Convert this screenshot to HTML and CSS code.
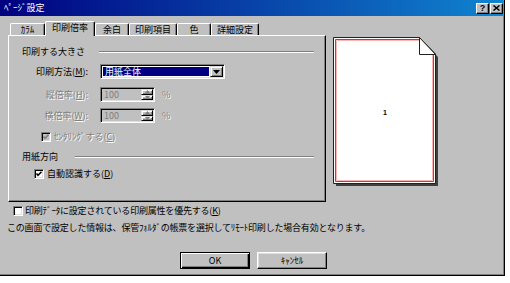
FILE: index.html
```html
<!DOCTYPE html>
<html lang="ja">
<head>
<meta charset="utf-8">
<link rel="stylesheet" href="styles.css">
</head>
<body>
<div class="dialog">
  <div class="titlebar">
    <span class="title">ﾍﾟｰｼﾞ設定</span>
    <div class="tbtns">
      <span class="tbtn help">?</span>
      <span class="tbtn"><svg width="7" height="6" viewBox="0 0 7 6"><path d="M0.5,0.5 L6.5,5.5 M6.5,0.5 L0.5,5.5" stroke="#000" stroke-width="1.5"/></svg></span>
    </div>
  </div>
  <div class="main">
    <div class="left">
      <div class="tabs">
        <span class="tab">ｶﾗﾑ</span>
        <span class="tab active">印刷倍率</span>
        <span class="tab">余白</span>
        <span class="tab">印刷項目</span>
        <span class="tab">色</span>
        <span class="tab">詳細設定</span>
      </div>
      <div class="panel">
        <div class="ghead g1"><span>印刷する大きさ</span><span class="line"></span></div>
        <div class="row r-combo">
          <span class="lbl">印刷方法(<u>M</u>):</span>
          <div class="combo">
            <span class="val">用紙全体</span>
            <span class="ddbtn"><svg width="7" height="4" viewBox="0 0 7 4"><path d="M0,0 H7 L3.5,4 Z" fill="#000"/></svg></span>
          </div>
        </div>
        <div class="row r-spin1">
          <span class="lbl dis">縦倍率(<u>H</u>):</span>
          <div class="spin">
            <span class="v">100</span>
            <span class="sbtns">
              <span class="sb"><svg width="5" height="3" viewBox="0 0 5 3"><path d="M2.5,0 L5,3 H0 Z" fill="#808080"/></svg></span>
              <span class="sb"><svg width="5" height="3" viewBox="0 0 5 3"><path d="M0,0 H5 L2.5,3 Z" fill="#808080"/></svg></span>
            </span>
          </div>
          <span class="pct dis">%</span>
        </div>
        <div class="row r-spin2">
          <span class="lbl dis">横倍率(<u>W</u>):</span>
          <div class="spin">
            <span class="v">100</span>
            <span class="sbtns">
              <span class="sb"><svg width="5" height="3" viewBox="0 0 5 3"><path d="M2.5,0 L5,3 H0 Z" fill="#808080"/></svg></span>
              <span class="sb"><svg width="5" height="3" viewBox="0 0 5 3"><path d="M0,0 H5 L2.5,3 Z" fill="#808080"/></svg></span>
            </span>
          </div>
          <span class="pct dis">%</span>
        </div>
        <div class="chk c-center">
          <span class="cb disabled"><svg width="8" height="8" viewBox="0 0 8 8"><path d="M1.5,3.5 L3,5.3 L6.5,1.8" fill="none" stroke="#808080" stroke-width="1.6"/></svg></span>
          <span class="dis">ｾﾝﾀﾘﾝｸﾞする(<u>C</u>)</span>
        </div>
        <div class="ghead g2"><span>用紙方向</span><span class="line"></span></div>
        <div class="chk c-auto">
          <span class="cb"><svg width="8" height="8" viewBox="0 0 8 8"><path d="M1.5,3.5 L3,5.3 L6.5,1.8" fill="none" stroke="#000" stroke-width="1.6"/></svg></span>
          <span>自動認識する(<u>D</u>)</span>
        </div>
      </div>
    </div>
    <div class="preview">
      <svg width="106" height="150" viewBox="0 0 106 150">
        <polygon points="3,3 89,3 105,20 105,149 3,149" fill="#404040"/>
        <polygon points="0.5,0.5 86.5,0.5 102.5,17 102.5,146.5 0.5,146.5" fill="#fff" stroke="#202020"/>
        <path d="M86,3.5 H3.5 V143.5 H99.5 V17.5" fill="none" stroke="#ffb4b4"/>
        <path d="M86,2.5 H2.5 V144.5 H100.5 V17.5" fill="none" stroke="#ff2020"/>
        <polygon points="86.5,0.5 86.5,17.5 102.5,17.5" fill="#fff" stroke="#202020"/>
        <text x="50" y="78" class="pnum">1</text>
      </svg>
    </div>
  </div>
  <div class="opt">
    <span class="cb"></span>
    <span>印刷ﾃﾞｰﾀに設定されている印刷属性を優先する(<u>K</u>)</span>
  </div>
  <div class="info">この画面で設定した情報は、保管ﾌｫﾙﾀﾞの帳票を選択してﾘﾓｰﾄ印刷した場合有効となります。</div>
  <div class="btns">
    <button class="btn def">OK</button>
    <button class="btn">ｷｬﾝｾﾙ</button>
  </div>
</div>
</body>
</html>
```
FILE: styles.css
```css
* { box-sizing: border-box; }
body {
  margin: 0;
  background: #fff;
  font-family: "Noto Sans CJK JP", sans-serif;
  font-size: 9px;
  line-height: 10px;
  color: #000;
}
u { text-decoration: underline; text-underline-offset: 1px; }
.dialog {
  width: 505px;
  height: 276px;
  background: #c0c0c0;
  border-right: 1px solid #000;
  border-bottom: 1px solid #000;
  box-shadow: inset -1px -1px #808080;
  display: flex;
  flex-direction: column;
}
.titlebar {
  height: 16px;
  margin-right: 1px;
  background: linear-gradient(to right, #000080, #1084d0);
  display: flex;
  align-items: center;
  padding-left: 4px;
  color: #fff;
}
.title { flex: 1; }
.tbtns { display: flex; gap: 1px; }
.tbtn {
  width: 13px;
  height: 11px;
  background: #c0c0c0;
  border: 1px solid;
  border-color: #fff #000 #000 #fff;
  box-shadow: inset -1px -1px #808080;
  display: flex;
  align-items: center;
  justify-content: center;
  color: #000;
}
.tbtn.help {
  font-family: "Liberation Sans", sans-serif;
  font-weight: bold;
  font-size: 9px;
  line-height: 9px;
}
.main { display: flex; padding: 5px 0 0 8px; }
.left { width: 318px; display: flex; flex-direction: column; }
.tabs { display: flex; align-items: flex-end; height: 14px; padding-left: 2px; }
.tab {
  height: 12px;
  min-width: 34px;
  padding: 0 5px;
  display: flex;
  align-items: center;
  justify-content: center;
  border-top: 1px solid #fff;
  border-left: 1px solid #fff;
  border-right: 1px solid #000;
  box-shadow: inset -1px 0 #808080;
  border-radius: 2px 2px 0 0;
  background: #c0c0c0;
}
.tab:first-child { min-width: 35px; }
.tab.active {
  height: 15px;
  padding: 0 6px 2px;
  margin-bottom: -1px;
  position: relative;
  z-index: 1;
}
.panel {
  height: 167px;
  border: 1px solid;
  border-color: #fff #000 #000 #fff;
  box-shadow: inset -1px -1px #808080;
  display: flex;
  flex-direction: column;
}
.ghead {
  display: flex;
  align-items: center;
  height: 12px;
  padding-left: 13px;
  padding-right: 11px;
}
.ghead .line {
  flex: 1;
  height: 2px;
  border-top: 1px solid #808080;
  border-bottom: 1px solid #fff;
  margin-left: 14px;
}
.g1 { margin-top: 10px; }
.g2 { margin-top: 8px; }
.g2 .line { margin-left: 17px; }
.row { display: flex; align-items: center; height: 15px; padding-left: 11px; }
.r-combo { margin-top: 6px; }
.r-spin1 { margin-top: 8px; }
.r-spin2 { margin-top: 6px; }
.lbl { width: 68px; text-align: right; margin-right: 12px; }
.dis { color: #808080; text-shadow: 1px 1px #fff; }
.combo {
  width: 125px;
  height: 15px;
  border: 1px solid;
  border-color: #808080 #fff #fff #808080;
  box-shadow: inset 1px 1px #000, inset -1px -1px #dfdfdf;
  background: #fff;
  display: flex;
  padding: 1px;
}
.combo .val {
  flex: 1;
  margin: 1px 1px 1px 1px;
  background: #000080;
  color: #fff;
  padding-left: 2px;
  display: flex;
  align-items: center;
}
.ddbtn, .sb {
  background: #c0c0c0;
  border: 1px solid;
  border-color: #dfdfdf #000 #000 #dfdfdf;
  box-shadow: inset 1px 1px #fff, inset -1px -1px #808080;
  display: flex;
  align-items: center;
  justify-content: center;
}
.ddbtn { width: 13px; }
.spin {
  width: 55px;
  height: 15px;
  border: 1px solid;
  border-color: #808080 #fff #fff #808080;
  box-shadow: inset 1px 1px #000, inset -1px -1px #dfdfdf;
  background: #c0c0c0;
  display: flex;
  padding: 1px;
}
.spin .v {
  flex: 1;
  color: #808080;
  padding-left: 2px;
  display: flex;
  align-items: center;
}
.sbtns { width: 12px; display: flex; flex-direction: column; }
.sb { flex: 1; }
.pct { margin-left: 7px; }
.chk { display: flex; align-items: center; height: 12px; gap: 3px; }
.c-center { margin-top: 8px; padding-left: 32px; }
.c-auto { margin-top: 5px; padding-left: 25px; }
.cb {
  width: 10px;
  height: 10px;
  flex: none;
  border: 1px solid;
  border-color: #808080 #fff #fff #808080;
  box-shadow: inset 1px 1px #000, inset -1px -1px #dfdfdf;
  background: #fff;
  display: flex;
}
.cb.disabled { background: #c0c0c0; }
.preview { margin: 16px 0 0 7px; }
.preview svg { display: block; }
.pnum { font-family: "Liberation Sans", sans-serif; font-size: 7px; font-weight: bold; fill: #000; }
.opt {
  display: flex;
  align-items: center;
  gap: 2px;
  height: 12px;
  margin-top: 3px;
  padding-left: 13px;
  letter-spacing: -0.2px;
}
.info {
  height: 12px;
  margin-top: 5px;
  padding-left: 7px;
  display: flex;
  align-items: center;
  letter-spacing: -0.2px;
}
.btns { display: flex; gap: 7px; margin-top: 18px; padding-left: 180px; }
.btn {
  width: 70px;
  height: 17px;
  padding: 0;
  font: inherit;
  color: #000;
  background: #c0c0c0;
  border: 1px solid;
  border-color: #fff #000 #000 #fff;
  box-shadow: inset -1px -1px #808080, inset 1px 1px #dfdfdf;
}
.btn.def {
  border-color: #000;
  box-shadow: inset 1px 1px #fff, inset -1px -1px #000, inset -2px -2px #808080;
}
```
